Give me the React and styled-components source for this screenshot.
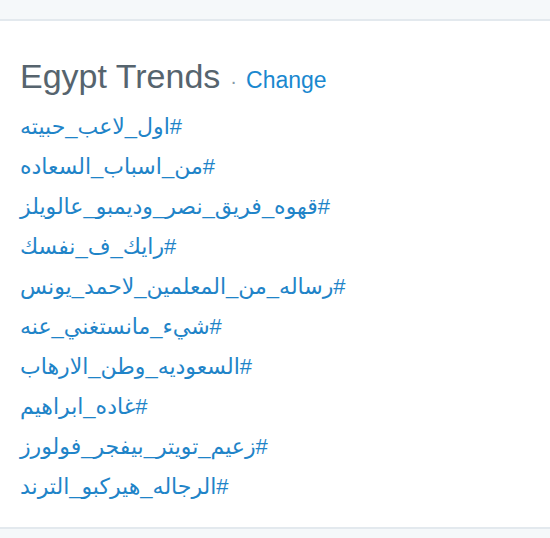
import React from "react";
import styled, { createGlobalStyle } from "styled-components";

const GlobalStyle = createGlobalStyle`
  html, body {
    margin: 0;
    padding: 0;
    background: #f5f8fa;
  }

  body {
    font-family: "Liberation Sans", Arial, "DejaVu Sans", sans-serif;
  }
`;

const Page = styled.div`
  padding: 19px 0 10px;
  min-height: 538px;
  box-sizing: border-box;
`;

const Card = styled.section`
  background: #fff;
  border-top: 2px solid #e3e9ee;
  border-bottom: 2px solid #e3e9ee;
  height: 510px;
  box-sizing: border-box;
  padding: 35px 20px 0;
`;

const Header = styled.h3`
  margin: 0 0 5px;
  font-weight: normal;
  line-height: 40px;
  white-space: nowrap;
`;

const Title = styled.span`
  font-size: 34px;
  color: #56646e;
`;

const Dot = styled.span`
  font-size: 20px;
  color: #8899a6;
  margin: 0 9px 0 10px;
`;

const ChangeLink = styled.a`
  font-size: 23px;
  color: #1a88cf;
  text-decoration: none;
  cursor: pointer;
`;

const TrendList = styled.ul`
  list-style: none;
  margin: 0;
  padding: 0;
`;

const TrendItem = styled.li`
  height: 40px;
  line-height: 40px;
`;

const TrendLink = styled.a`
  display: inline-block;
  font-size: 22px;
  color: #1f84c8;
  text-decoration: none;
  cursor: pointer;
`;

const trends = [
  "#اول_لاعب_حبيته",
  "#من_اسباب_السعاده",
  "#قهوه_فريق_نصر_وديمبو_عالويلز",
  "#رايك_ف_نفسك",
  "#رساله_من_المعلمين_لاحمد_يونس",
  "#شيء_مانستغني_عنه",
  "#السعوديه_وطن_الارهاب",
  "#غاده_ابراهيم",
  "#زعيم_تويتر_بيفجر_فولورز",
  "#الرجاله_هيركبو_الترند",
];

const App = () => {
  return (
    <>
      <GlobalStyle />
      <Page>
        <Card>
          <Header>
            <Title>Egypt Trends</Title>
            <Dot>·</Dot>
            <ChangeLink>Change</ChangeLink>
          </Header>
          <TrendList>
            {trends.map((tag) => (
              <TrendItem key={tag}>
                <TrendLink dir="rtl">{tag}</TrendLink>
              </TrendItem>
            ))}
          </TrendList>
        </Card>
      </Page>
    </>
  );
};

export default App;
